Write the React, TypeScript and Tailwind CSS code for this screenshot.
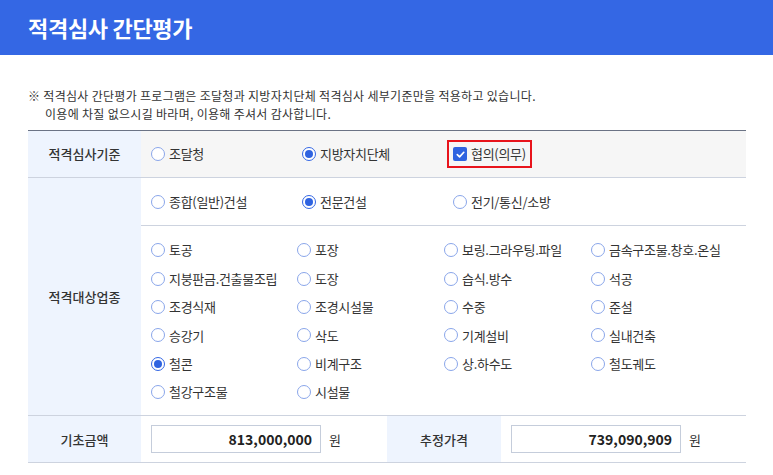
import React from "react";

const FONT = { fontFamily: '"Noto Sans CJK KR", "Noto Sans", sans-serif' };

function Radio({ label, checked = false }: { label: string; checked?: boolean }) {
  return (
    <label className="flex items-center gap-[4px] text-[13px] tracking-[-0.3px] text-[#333] whitespace-nowrap">
      <span
        className={`flex h-[14px] w-[14px] shrink-0 items-center justify-center rounded-full border bg-white ${
          checked ? "border-[#3467e4]" : "border-[#8aa6ea]"
        }`}
      >
        {checked && <span className="h-[8px] w-[8px] rounded-full bg-[#2f63e0]" />}
      </span>
      {label}
    </label>
  );
}

const trades = [
  "토공", "포장", "보링.그라우팅.파일", "금속구조물.창호.온실",
  "지붕판금.건출물조립", "도장", "습식.방수", "석공",
  "조경식재", "조경시설물", "수중", "준설",
  "승강기", "삭도", "기계설비", "실내건축",
  "철콘", "비계구조", "상.하수도", "철도궤도",
  "철강구조물", "시설물",
];

export default function App() {
  return (
    <div className="h-[475px] w-[773px] overflow-hidden bg-white" style={FONT}>
      {/* HEADER */}
      <div className="flex h-[55px] items-center bg-[#3467e4] px-[28px]">
        <h1 className="text-[22px] font-bold tracking-[-0.3px] text-white">적격심사 간단평가</h1>
      </div>

      {/* NOTE */}
      <div className="mx-[28px] mt-[32px] text-[12px] leading-[17.5px] tracking-[0.3px] text-[#333]">
        <p>※ 적격심사 간단평가 프로그램은 조달청과 지방자치단체 적격심사 세부기준만을 적용하고 있습니다.</p>
        <p className="pl-[17px]">이용에 차질 없으시길 바라며, 이용해 주셔서 감사합니다.</p>
      </div>

      {/* TABLE */}
      <div className="mx-[28px] mt-[8px] w-[718px] border-t border-[#6b7385]">
        {/* row 1 */}
        <div className="flex h-[47px] border-b border-[#cdd3df]">
          <div className="flex w-[113px] items-center justify-center bg-[#eef4fe] text-[13px] font-medium text-[#333]">
            적격심사기준
          </div>
          <div className="flex flex-1 items-center bg-[#f6f6f6] pl-[10px]">
            <div className="w-[151px]">
              <Radio label="조달청" />
            </div>
            <div className="w-[145px]">
              <Radio label="지방자치단체" checked />
            </div>
            <div className="flex items-center gap-[4px] border-2 border-[#e8141c] px-[4px] py-[2px] text-[13px] tracking-[-0.3px] text-[#333]">
              <span className="flex h-[14px] w-[14px] items-center justify-center rounded-[2px] bg-[#2f63e0]">
                <svg width="11" height="11" viewBox="0 0 12 12" fill="none">
                  <path d="M2.5 6.2 L5 8.6 L9.6 3.6" stroke="white" strokeWidth="1.8" strokeLinecap="round" strokeLinejoin="round" />
                </svg>
              </span>
              협의(의무)
            </div>
          </div>
        </div>

        {/* rows 2 + 3 */}
        <div className="flex border-b border-[#cdd3df]">
          <div className="flex w-[113px] items-center justify-center bg-[#eef4fe] text-[13px] font-medium text-[#333]">
            적격대상업종
          </div>
          <div className="flex-1">
            <div className="flex h-[48px] items-center border-b border-[#cdd3df] pl-[10px]">
              <div className="w-[151px]">
                <Radio label="종합(일반)건설" />
              </div>
              <div className="w-[151px]">
                <Radio label="전문건설" checked />
              </div>
              <Radio label="전기/통신/소방" />
            </div>
            <div className="grid grid-cols-[146px_147px_147px_1fr] auto-rows-[28.4px] pb-[9px] pl-[10px] pt-[10px]">
              {trades.map((t) => (
                <div key={t} className="flex items-center">
                  <Radio label={t} checked={t === "철콘"} />
                </div>
              ))}
            </div>
          </div>
        </div>

        {/* row 4 */}
        <div className="flex h-[47px] items-center border-b border-[#cdd3df]">
          <div className="flex h-full w-[113px] items-center justify-center bg-[#eef4fe] text-[13px] font-medium text-[#333]">
            기초금액
          </div>
          <div className="flex w-[246px] items-center gap-[8px] pl-[10px]">
            <div className="flex h-[28px] w-[170px] items-center justify-end border border-[#c5cddb] px-[8px] text-[14px] font-semibold text-[#222]">
              813,000,000
            </div>
            <span className="text-[13px] text-[#333]">원</span>
          </div>
          <div className="flex h-full w-[114px] items-center justify-center bg-[#eef4fe] text-[13px] font-medium text-[#333]">
            추정가격
          </div>
          <div className="flex items-center gap-[8px] pl-[10px]">
            <div className="flex h-[28px] w-[170px] items-center justify-end border border-[#c5cddb] px-[8px] text-[14px] font-semibold text-[#222]">
              739,090,909
            </div>
            <span className="text-[13px] text-[#333]">원</span>
          </div>
        </div>
      </div>
    </div>
  );
}
